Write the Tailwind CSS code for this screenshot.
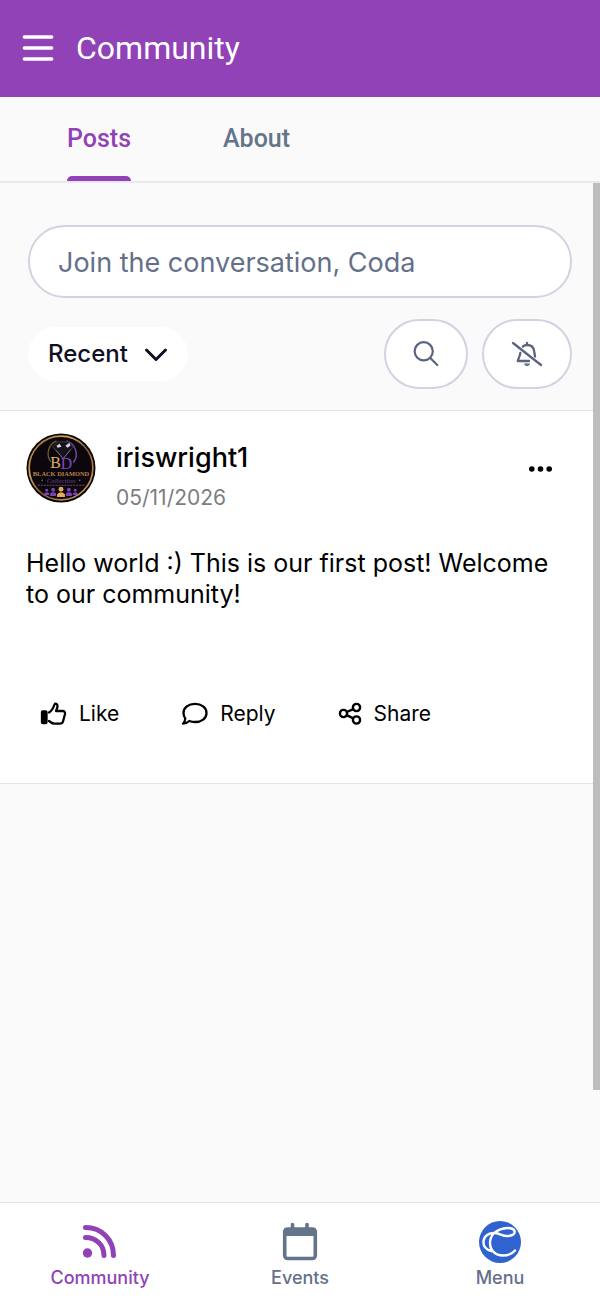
<!DOCTYPE html>
<html lang="en">
  <head>
    <meta charset="UTF-8" />
    <meta name="viewport" content="width=device-width, initial-scale=1.0" />
    <title>Community</title>
    <!-- Tailwind CSS -->
    <script src="https://cdn.jsdelivr.net/npm/@tailwindcss/browser@4"></script>
    <style>
      body { font-family: Inter, "Liberation Sans", sans-serif; }
    </style>
  </head>
  <body class="bg-[#fafafa] h-screen flex flex-col text-black">
    <!-- App bar -->
    <header class="bg-[#9042b6] text-white h-[97px] shrink-0 flex items-center gap-[22px] px-[22px] pb-[2px]">
      <button type="button" aria-label="Open menu">
        <svg class="w-8 h-8" viewBox="0 0 32 32" fill="none" stroke="currentColor" stroke-width="3.4" stroke-linecap="round">
          <path d="M2.300 5H29.700M2.300 16H29.700M2.300 27H29.700" />
        </svg>
      </button>
      <h1 class="text-[32px] leading-10 font-[Roboto]">Community</h1>
    </header>

    <!-- Tabs -->
    <nav class="h-[86px] shrink-0 flex gap-[92px] px-[67px] border-b-2 border-[#e8e8ee] font-[Roboto] text-[25px] font-medium text-[#64748b]">
      <a href="#posts" class="flex flex-col justify-between pt-6 text-[#9042b6]">
        <span class="leading-9">Posts</span>
        <span class="h-[5px] rounded-t-md bg-[#9042b6]"></span>
      </a>
      <a href="#about" class="pt-6 leading-9">About</a>
    </nav>

    <main class="relative flex-1 min-h-0">
      <!-- Composer and filters -->
      <section class="pt-[42px] pb-[21px] px-7 border-b border-[#e4e4e7]">
        <input
          type="text"
          aria-label="Join the conversation"
          placeholder="Join the conversation, Coda"
          class="block w-full h-[73px] rounded-full border-2 border-[#d0d4e1] bg-white px-7 pt-[2px] text-[27px] placeholder:text-[#64708a]"
        />
        <div class="flex items-center mt-[21px]">
          <button type="button" class="h-[54px] rounded-full bg-white px-5 flex items-center gap-4 text-[24px] font-medium text-[#0f1024]">
            Recent
            <svg class="w-6 h-6" viewBox="0 0 24 24" fill="none" stroke="currentColor" stroke-width="3" stroke-linecap="round" stroke-linejoin="round">
              <path d="M2.500 8L12 17.500L21.500 8" />
            </svg>
          </button>
          <button type="button" aria-label="Search" class="ml-auto w-[84px] h-[70px] rounded-full border-2 border-[#d0d4e1] bg-white text-[#5b647e] flex items-center justify-center">
            <svg class="w-7 h-7" viewBox="0 0 28 28" fill="none" stroke="currentColor" stroke-width="2.200" stroke-linecap="round">
              <circle cx="11.700" cy="11.300" r="9.100" />
              <path d="M18.300 18L25.300 25" />
            </svg>
          </button>
          <button type="button" aria-label="Mute notifications" class="ml-[14px] w-[90px] h-[70px] rounded-full border-2 border-[#d0d4e1] bg-white text-[#5b647e] flex items-center justify-center">
            <svg class="w-8 h-8" viewBox="0 0 32 32" fill="none" stroke="currentColor" stroke-width="2.300" stroke-linecap="round" stroke-linejoin="round">
              <path d="M2 5L30 27" />
              <path d="M16 4.800V6.800M11.800 8.600C13 7.500 14.400 7 16 7C20.500 7 22.800 10 23.200 13.400L24 18.500" />
              <path d="M9.300 15C9 18.500 7.200 20.500 6.800 23H18" />
              <path d="M13.700 26.300C14.600 28.200 17.600 28.200 18.400 26.300Z" fill="currentColor" stroke-width="1" />
            </svg>
          </button>
        </div>
      </section>

      <!-- Post -->
      <article class="bg-white border-b border-[#e4e4e7] pt-[22px] pb-[49px] px-[26px]">
        <div class="flex">
          <svg class="w-[70px] h-[70px] shrink-0" viewBox="0 0 71 71" role="img" aria-label="Black Diamond Collection">
            <defs>
              <linearGradient id="gold" x1="0" y1="0" x2="1" y2="1">
                <stop offset="0" stop-color="#8a5a22" />
                <stop offset=".3" stop-color="#d9a75a" />
                <stop offset=".55" stop-color="#8a5a30" />
                <stop offset="1" stop-color="#e0ae62" />
              </linearGradient>
            </defs>
            <circle cx="35.500" cy="35.500" r="35" fill="#080509" />
            <circle cx="35.500" cy="35.500" r="32.300" fill="#0b070c" stroke="url(#gold)" stroke-width="1.700" />
            <path d="M25 29A14 14 0 0 1 31 8" fill="none" stroke="#71602b" stroke-width="1.300" />
            <path d="M41 8A14 14 0 0 1 48 30" fill="none" stroke="#7046a0" stroke-width="1.500" />
            <path d="M27 14L32 9H43L48 14L37.500 26Z" fill="#17131d" stroke="#4b4653" stroke-width=".8" />
            <path d="M31 13L34 11L36 14L32 15ZM40 13L44 10L45 13L42 15Z" fill="#d9d6df" />
            <path d="M30 17L37 25M45 17L38 26" stroke="#82799a" stroke-width=".8" />
            <g font-family="Liberation Serif, serif" text-anchor="middle">
              <text x="30" y="35" font-size="16" fill="#e0ac6a">B</text>
              <text x="41" y="37" font-size="16" fill="#8048c4">D</text>
              <text x="35.500" y="44" font-size="6.500" font-weight="bold" fill="#bd844a">BLACK DIAMOND</text>
              <text x="35.500" y="51" font-size="7" font-style="italic" fill="#6e439b">Collection</text>
            </g>
            <path d="M12 53H59" stroke="#6d5066" stroke-width="1" stroke-dasharray="2 1" />
            <circle cx="16.500" cy="48" r=".8" fill="#9a7197" />
            <circle cx="54.500" cy="48" r=".8" fill="#9a7197" />
            <g fill="#7a43b4">
              <circle cx="21" cy="58" r="1.500" /><path d="M18.500 63V61Q21 59 23.500 61V63Z" />
              <circle cx="27.500" cy="57.500" r="2" /><path d="M24.500 64V61Q27.500 59 30.500 61V64Z" />
              <circle cx="43.500" cy="57.500" r="2" /><path d="M40.500 64V61Q43.500 59 46.500 61V64Z" />
              <circle cx="50" cy="58" r="1.500" /><path d="M47.500 63V61Q50 59 52.500 61V63Z" />
            </g>
            <g fill="#e7ac58"><circle cx="35.500" cy="57" r="2.500" /><path d="M31.500 65V62Q35.500 58 39.500 62V65Z" /></g>
          </svg>
          <div class="ml-5 pt-[5px]">
            <h2 class="text-[27px] leading-10 font-medium">iriswright1</h2>
            <p class="text-[21px] leading-10 text-[#7d7d82]">05/11/2026</p>
          </div>
          <button type="button" aria-label="More options" class="ml-auto mr-[21px] h-[71px]">
            <svg class="w-[25px] h-6" viewBox="0 0 25 24" fill="currentColor">
              <circle cx="3.800" cy="12" r="2.800" /><circle cx="12.500" cy="12" r="2.800" /><circle cx="21.200" cy="12" r="2.800" />
            </svg>
          </button>
        </div>

        <p class="mt-[30px] text-[25px] leading-[31px]">Hello world :) This is our first post! Welcome to our community!</p>

        <div class="flex mt-[84px] pl-[14px] text-[21px] leading-10">
          <button type="button" class="flex items-center gap-3">
            <svg class="w-[27px] h-6" viewBox="0 0 27 24" fill="none" stroke="currentColor" stroke-width="2.300" stroke-linejoin="round" stroke-linecap="round">
              <rect x="2" y="9.500" width="4.500" height="11.500" rx=".8" fill="currentColor" />
              <path d="M9 10.500C11.500 9 13.500 5.500 14.500 2.500C15.300 1.200 17.500 1.800 17.500 4C17.500 6 16.700 7.300 16 9H22.500C24.500 9 25.300 10.300 25 12L23 19.500C22.600 21 21.800 21.700 20 21.700H14.500C12 21.700 10.500 20 9 19" />
            </svg>
            Like
          </button>
          <button type="button" class="flex items-center gap-3 ml-[62px]">
            <svg class="w-[27px] h-6" viewBox="0 0 27 24" fill="none" stroke="currentColor" stroke-width="2.300" stroke-linejoin="round">
              <path d="M14 1.800C20.500 1.800 25.500 5.500 25.500 11C25.500 16.500 20.500 20 14 20C12 20 10 19.700 8.300 19C6.500 20.700 4.500 21.700 2 21.700C3.500 20 4.200 18.500 4.300 16.500C3 15 2.500 13 2.500 11C2.500 5.500 7.500 1.800 14 1.800Z" />
            </svg>
            Reply
          </button>
          <button type="button" class="flex items-center gap-3 ml-[62px]">
            <svg class="w-6 h-6" viewBox="0 0 24 24" fill="none" stroke="currentColor" stroke-width="2.400">
              <circle cx="5.500" cy="11.500" r="3.600" /><circle cx="18.500" cy="5.500" r="3.600" /><circle cx="18.500" cy="18" r="3.600" />
              <path d="M8.700 10L15.300 7.100M8.700 13.200L15.300 16.400" />
            </svg>
            Share
          </button>
        </div>
      </article>

      <!-- Scroll thumb -->
      <div class="absolute top-0 right-0 w-[7px] h-[89%] bg-[#bdbdbd]"></div>
    </main>

    <!-- Bottom navigation -->
    <nav class="h-[97px] shrink-0 grid grid-cols-3 bg-white border-t border-[#e4e4e7] text-[18px] leading-6 font-medium text-[#64708a]">
      <a href="#community" class="flex flex-col items-center pt-[17px] gap-[2px] text-[#9042b6]">
        <svg class="w-11 h-11" viewBox="0 0 44 44" fill="none" stroke="currentColor" stroke-width="5" stroke-linecap="round">
          <path d="M7.500 7.500C24 7.500 35.500 20 35.500 35.500M7.500 17.500C18 17.500 26 25 26 35.500" />
          <circle cx="9.500" cy="33" r="4.700" fill="currentColor" stroke="none" />
        </svg>
        Community
      </a>
      <a href="#events" class="flex flex-col items-center pt-[17px] gap-[2px]">
        <svg class="w-11 h-11" viewBox="0 0 44 44" fill="none" stroke="#64748b">
          <rect x="6.700" y="9" width="30.600" height="29.500" rx="3" stroke-width="3.600" />
          <path d="M6 8.500H38V16H6Z" fill="#64748b" stroke="none" />
          <path d="M14.500 4.500V10M29 4.500V10" stroke-width="3.600" stroke-linecap="round" />
        </svg>
        Events
      </a>
      <a href="#menu" class="flex flex-col items-center pt-[17px] gap-[2px]">
        <svg class="w-11 h-11" viewBox="0 0 44 44" fill="none" stroke="#fff" stroke-width="2.400" stroke-linecap="round" stroke-linejoin="round">
          <circle cx="22" cy="22" r="21" fill="#3063d0" stroke="none" />
          <path d="M13.500 31C8 30 5 26 5.500 21C6 16 11 12.500 17 13C22 13.400 24 16 29 16C34 16 37.500 14 36.500 11C35.500 8 30 7.500 25.500 8.500C17 10.500 12 16 12 23C12 30 17 35.500 25 35.500C31 35.500 34.500 33.500 37 30.500" />
        </svg>
        Menu
      </a>
    </nav>
  </body>
</html>
